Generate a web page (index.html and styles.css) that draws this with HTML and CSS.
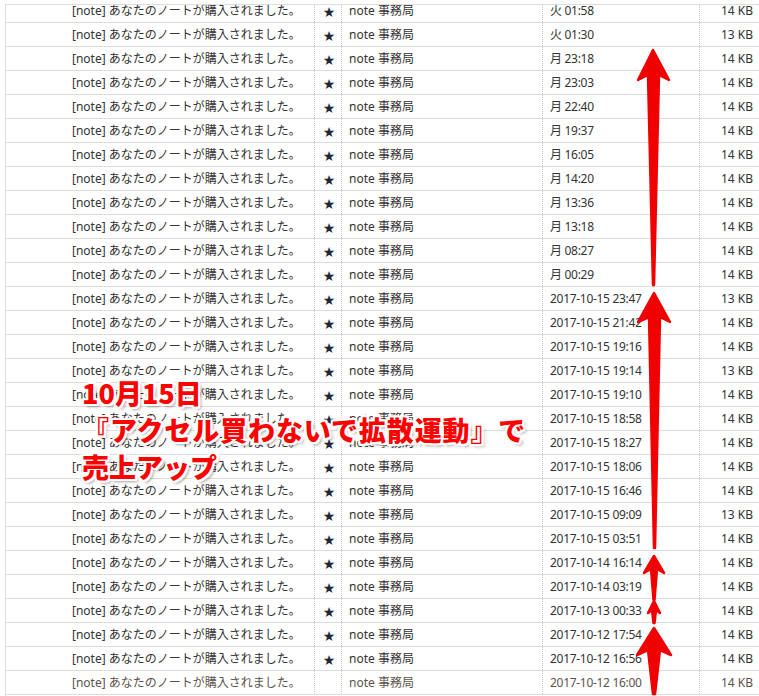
FILE: index.html
```html
<!DOCTYPE html>
<html lang="ja">
<head>
<meta charset="utf-8">
<title>note 売上</title>
<link rel="stylesheet" href="styles.css">
</head>
<body>
<div class="mail">
  <div class="list">
    <div class="row"><div class="c subj">[note] あなたのノートが購入されました。</div><div class="c star">★</div><div class="c from">note 事務局</div><div class="c date">火 01:58</div><div class="c size">14 KB</div></div>
    <div class="row"><div class="c subj">[note] あなたのノートが購入されました。</div><div class="c star">★</div><div class="c from">note 事務局</div><div class="c date">火 01:30</div><div class="c size">13 KB</div></div>
    <div class="row"><div class="c subj">[note] あなたのノートが購入されました。</div><div class="c star">★</div><div class="c from">note 事務局</div><div class="c date">月 23:18</div><div class="c size">14 KB</div></div>
    <div class="row"><div class="c subj">[note] あなたのノートが購入されました。</div><div class="c star">★</div><div class="c from">note 事務局</div><div class="c date">月 23:03</div><div class="c size">14 KB</div></div>
    <div class="row"><div class="c subj">[note] あなたのノートが購入されました。</div><div class="c star">★</div><div class="c from">note 事務局</div><div class="c date">月 22:40</div><div class="c size">14 KB</div></div>
    <div class="row"><div class="c subj">[note] あなたのノートが購入されました。</div><div class="c star">★</div><div class="c from">note 事務局</div><div class="c date">月 19:37</div><div class="c size">14 KB</div></div>
    <div class="row"><div class="c subj">[note] あなたのノートが購入されました。</div><div class="c star">★</div><div class="c from">note 事務局</div><div class="c date">月 16:05</div><div class="c size">14 KB</div></div>
    <div class="row"><div class="c subj">[note] あなたのノートが購入されました。</div><div class="c star">★</div><div class="c from">note 事務局</div><div class="c date">月 14:20</div><div class="c size">14 KB</div></div>
    <div class="row"><div class="c subj">[note] あなたのノートが購入されました。</div><div class="c star">★</div><div class="c from">note 事務局</div><div class="c date">月 13:36</div><div class="c size">14 KB</div></div>
    <div class="row"><div class="c subj">[note] あなたのノートが購入されました。</div><div class="c star">★</div><div class="c from">note 事務局</div><div class="c date">月 13:18</div><div class="c size">14 KB</div></div>
    <div class="row"><div class="c subj">[note] あなたのノートが購入されました。</div><div class="c star">★</div><div class="c from">note 事務局</div><div class="c date">月 08:27</div><div class="c size">14 KB</div></div>
    <div class="row"><div class="c subj">[note] あなたのノートが購入されました。</div><div class="c star">★</div><div class="c from">note 事務局</div><div class="c date">月 00:29</div><div class="c size">14 KB</div></div>
    <div class="row"><div class="c subj">[note] あなたのノートが購入されました。</div><div class="c star">★</div><div class="c from">note 事務局</div><div class="c date">2017-10-15 23:47</div><div class="c size">13 KB</div></div>
    <div class="row"><div class="c subj">[note] あなたのノートが購入されました。</div><div class="c star">★</div><div class="c from">note 事務局</div><div class="c date">2017-10-15 21:42</div><div class="c size">14 KB</div></div>
    <div class="row"><div class="c subj">[note] あなたのノートが購入されました。</div><div class="c star">★</div><div class="c from">note 事務局</div><div class="c date">2017-10-15 19:16</div><div class="c size">14 KB</div></div>
    <div class="row"><div class="c subj">[note] あなたのノートが購入されました。</div><div class="c star">★</div><div class="c from">note 事務局</div><div class="c date">2017-10-15 19:14</div><div class="c size">13 KB</div></div>
    <div class="row"><div class="c subj">[note] あなたのノートが購入されました。</div><div class="c star">★</div><div class="c from">note 事務局</div><div class="c date">2017-10-15 19:10</div><div class="c size">14 KB</div></div>
    <div class="row"><div class="c subj">[note] あなたのノートが購入されました。</div><div class="c star">★</div><div class="c from">note 事務局</div><div class="c date">2017-10-15 18:58</div><div class="c size">14 KB</div></div>
    <div class="row"><div class="c subj">[note] あなたのノートが購入されました。</div><div class="c star">★</div><div class="c from">note 事務局</div><div class="c date">2017-10-15 18:27</div><div class="c size">14 KB</div></div>
    <div class="row"><div class="c subj">[note] あなたのノートが購入されました。</div><div class="c star">★</div><div class="c from">note 事務局</div><div class="c date">2017-10-15 18:06</div><div class="c size">14 KB</div></div>
    <div class="row"><div class="c subj">[note] あなたのノートが購入されました。</div><div class="c star">★</div><div class="c from">note 事務局</div><div class="c date">2017-10-15 16:46</div><div class="c size">14 KB</div></div>
    <div class="row"><div class="c subj">[note] あなたのノートが購入されました。</div><div class="c star">★</div><div class="c from">note 事務局</div><div class="c date">2017-10-15 09:09</div><div class="c size">13 KB</div></div>
    <div class="row"><div class="c subj">[note] あなたのノートが購入されました。</div><div class="c star">★</div><div class="c from">note 事務局</div><div class="c date">2017-10-15 03:51</div><div class="c size">14 KB</div></div>
    <div class="row"><div class="c subj">[note] あなたのノートが購入されました。</div><div class="c star">★</div><div class="c from">note 事務局</div><div class="c date">2017-10-14 16:14</div><div class="c size">14 KB</div></div>
    <div class="row"><div class="c subj">[note] あなたのノートが購入されました。</div><div class="c star">★</div><div class="c from">note 事務局</div><div class="c date">2017-10-14 03:19</div><div class="c size">14 KB</div></div>
    <div class="row"><div class="c subj">[note] あなたのノートが購入されました。</div><div class="c star">★</div><div class="c from">note 事務局</div><div class="c date">2017-10-13 00:33</div><div class="c size">14 KB</div></div>
    <div class="row"><div class="c subj">[note] あなたのノートが購入されました。</div><div class="c star">★</div><div class="c from">note 事務局</div><div class="c date">2017-10-12 17:54</div><div class="c size">14 KB</div></div>
    <div class="row"><div class="c subj">[note] あなたのノートが購入されました。</div><div class="c star">★</div><div class="c from">note 事務局</div><div class="c date">2017-10-12 16:56</div><div class="c size">14 KB</div></div>
    <div class="row last"><div class="c subj">[note] あなたのノートが購入されました。</div><div class="c star"></div><div class="c from">note 事務局</div><div class="c date">2017-10-12 16:00</div><div class="c size">14 KB</div></div>
  </div>
</div>

<svg class="arrows" width="759" height="696" viewBox="0 0 759 696" xmlns="http://www.w3.org/2000/svg">
  <g fill="#f00000" stroke="#f00000" stroke-width="2.5" stroke-linejoin="round">
    <polygon points="653,50 669,80 659,75 654,285 653,285 648,75 638,80"/>
    <polygon points="654,293 670,322 660,317 655,548 654,548 649,317 638,322"/>
    <polygon points="654,556 664,573 657,569 654.5,600 653.5,600 651,569 644,573"/>
    <polygon points="654,601 660,613 656,610 654.5,623 653.5,623 652,610 648,613"/>
    <polygon points="654,628 671,655 660,650 655,694 653,694 648,650 637,655"/>
  </g>
</svg>

<div class="note">
  <div class="note-line">10月15日</div>
  <div class="note-line wide">『アクセル買わないで拡散運動』で</div>
  <div class="note-line">売上アップ</div>
</div>
</body>
</html>
```

FILE: styles.css
```css
html, body {
  margin: 0;
  padding: 0;
  background: #ffffff;
}

body {
  width: 759px;
  height: 696px;
  overflow: hidden;
  position: relative;
  font-family: "Noto Sans", "Open Sans", "Noto Sans CJK JP", sans-serif;
  font-size: 12px;
  color: #333333;
}

.mail {
  margin: 4px 0 0 5px;
  height: 692px;
  border-top: 1px solid #dedede;
  border-left: 1px solid #dedede;
  overflow: hidden;
}

.list {
  margin-top: -6px;
}

.row {
  display: grid;
  grid-template-columns: 309px 27px 201px 157px 1fr;
  height: 24px;
  box-sizing: border-box;
  border-bottom: 1px solid #dcdcdc;
}

.c {
  box-sizing: border-box;
  display: flex;
  align-items: center;
  white-space: nowrap;
  overflow: hidden;
  line-height: 23px;
}

.subj,
.star,
.from,
.date {
  border-right: 1px dotted #c8c8c8;
}

.subj {
  padding-left: 66px;
}

.star {
  justify-content: center;
  padding-left: 2px;
  padding-top: 4px;
  font-family: "DejaVu Sans", sans-serif;
  font-size: 14px;
  color: #22263a;
}

.from {
  padding-left: 7px;
}

.date {
  padding-left: 7px;
  letter-spacing: -0.3px;
}

.size {
  justify-content: flex-end;
  padding-right: 6px;
}

.row.last .c {
  color: #5c534c;
}

.arrows {
  position: absolute;
  left: 0;
  top: 0;
  pointer-events: none;
}

.note {
  position: absolute;
  left: 82px;
  top: 374px;
  font-family: "Noto Sans CJK JP", "Noto Sans", sans-serif;
  font-weight: 900;
  font-size: 27px;
  line-height: 37px;
  color: #ff0000;
  text-shadow:
    2px 0 0 #fff, -2px 0 0 #fff, 0 2px 0 #fff, 0 -2px 0 #fff,
    2px 2px 0 #fff, -2px -2px 0 #fff, 2px -2px 0 #fff, -2px 2px 0 #fff,
    3px 3px 3px rgba(0, 0, 0, 0.35);
}

.note-line {
  white-space: nowrap;
}

.note-line.wide {
  letter-spacing: 0.9px;
}
```
